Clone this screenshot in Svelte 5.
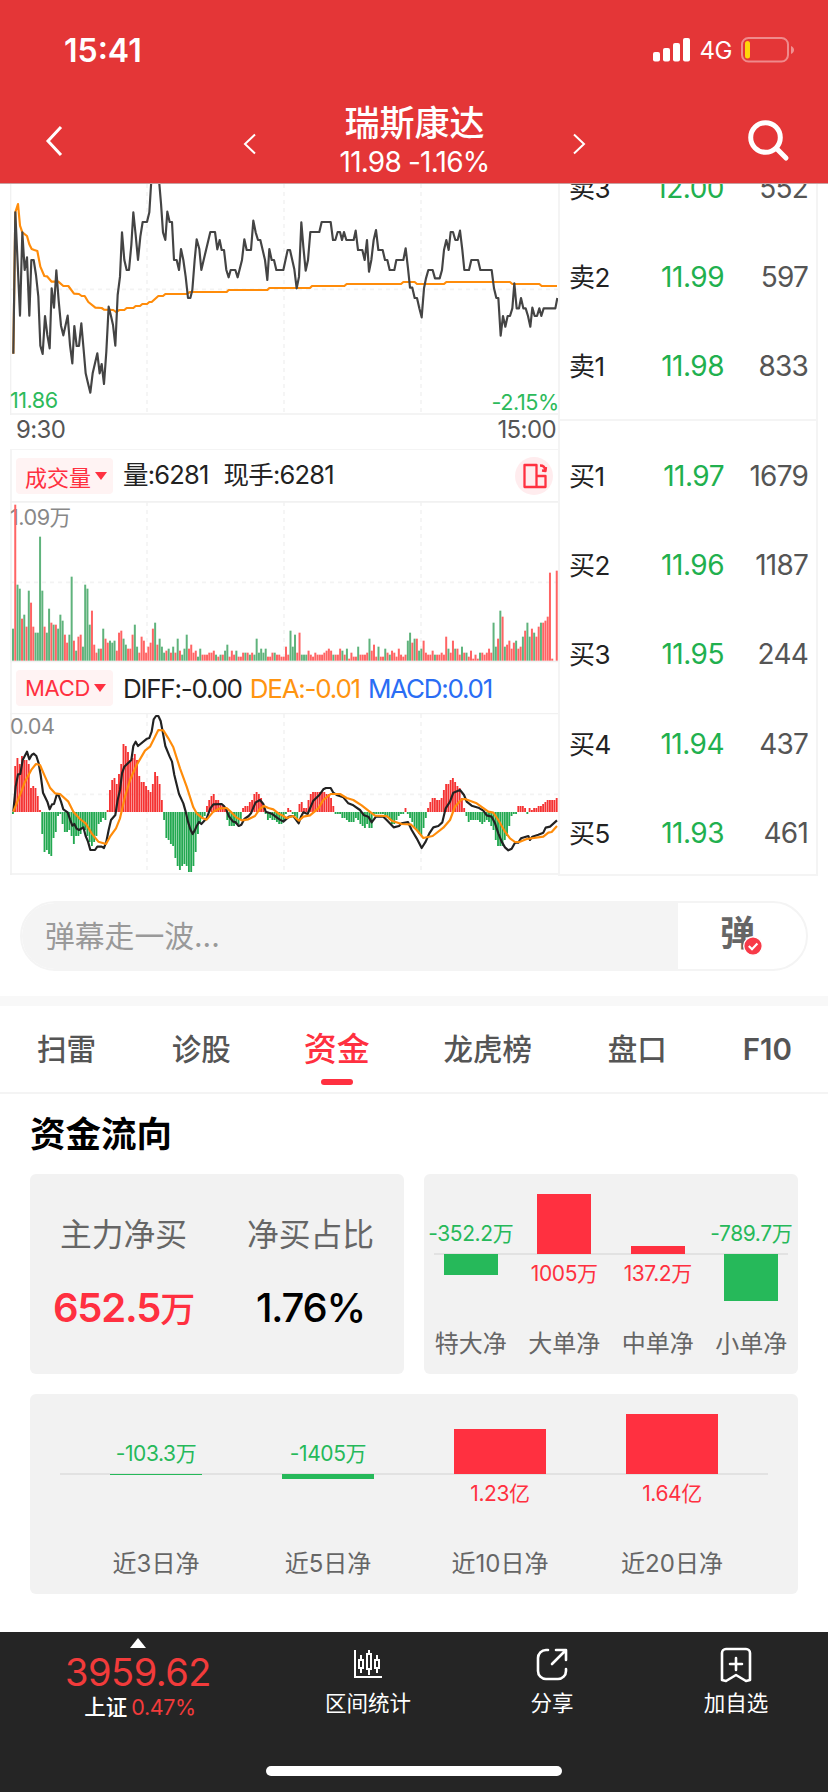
<script lang="ts">
  /** Intraday stock detail page: minute charts, order book, fund flow cards. */

  type Level = { label: string; price: string; volume: string };
  type Flow = { name: string; value: string; height: number };

  // Chart coordinates are in device pixels (3 per CSS px). Every session is
  // recorded from its own origin, the afternoon one starts at PM_OFFSET.
  const PM_OFFSET = 840;
  const LEFT = 36;
  const RIGHT = 1674;

  function line(am: string, pm: string) {
    const parse = (s: string, dx: number) =>
      s.split(" ").map((p) => {
        const [x, y] = p.split(",").map(Number);
        return `${x + dx},${y}`;
      });
    return [...parse(am, 0), ...parse(pm, PM_OFFSET)].join(" ");
  }

  const price = line(
    "40,521 46,97 53,250 60,407 67,157 74,270 81,232 88,407 94,240 101,240 108,285 115,350 121,497 128,522 135,408 142,465 149,505 155,325 162,383 169,271 176,362 183,437 190,466 203,407 210,495 217,550 223,438 230,498 237,498 244,430 251,510 257,580 264,610 271,638 278,580 292,520 299,580 305,552 312,612 319,515 326,380 333,408 339,435 346,497 353,345 360,290 366,157 373,240 380,270 387,270 394,195 400,97 407,165 414,240 421,170 428,126 441,126 448,97 454,0 477,0 483,70 489,157 496,180 502,95 509,126 516,126 522,240 530,240 537,270 543,207 550,240 557,290 564,354 571,354 577,330 584,240 590,178 598,207 604,270 611,240 631,156 645,156 652,208 659,180 665,210 672,210 679,270 686,292 692,270 706,270 713,292 726,240 733,178 740,210 753,210 760,122 767,157 774,180 781,180 788,210 795,240 802,300 808,207 815,240 822,240 829,270 850,270",
    "23,210 30,210 43,268 50,325 57,290 64,127 70,200 77,272 84,240 91,156 118,156 125,126 152,126 159,180 166,180 173,156 180,156 186,180 192,156 199,180 221,180 227,152 234,210 247,210 254,240 261,180 267,275 274,240 281,180 288,150 295,210 308,210 315,240 322,240 329,270 343,270 349,240 370,240 377,205 384,265 390,323 397,323 404,354 411,354 418,385 425,412 432,325 438,295 445,270 458,270 465,295 479,295 486,270 492,210 499,180 506,210 512,156 519,156 526,180 533,180 540,152 547,210 553,270 567,270 574,240 594,240 601,270 635,270 642,325 649,354 655,354 662,467 669,408 676,440 683,408 690,408 697,385 703,310 710,385 717,385 723,354 730,385 737,385 744,408 751,440 757,383 764,408 771,408 778,385 784,408 791,385 826,385 832,354"
  );
  const average = line(
    "40,521 46,97 54,72 60,137 67,157 81,168 88,193 95,207 103,210 112,213 121,260 133,288 141,289 155,305 175,305 190,318 205,318 222,341 237,342 245,348 254,348 265,366 286,383 305,384 312,389 340,390 348,396 358,390 373,390 380,384 400,384 407,378 420,378 427,372 441,372 448,366 455,366 475,348 489,348 496,342 560,342 570,336 680,336 686,330 802,330 808,324",
    "50,324 90,324 96,318 193,318 200,312 363,312 370,306 404,306 411,312 492,312 499,306 690,306 697,312 778,312 785,318 831,318"
  );
  const diff = line(
    "40,455 47,380 54,343 61,342 68,300 81,275 88,298 95,285 101,281 109,288 116,310 122,345 129,398 142,425 149,448 156,433 162,432 170,405 176,406 183,425 190,448 203,457 210,478 217,497 223,492 230,506 237,510 250,502 257,528 264,545 271,570 285,570 292,560 305,560 312,564 319,545 326,510 333,480 346,465 353,420 360,390 366,340 373,320 394,300 400,258 407,245 414,258 441,236 448,234 455,215 461,178 468,168 475,168 482,183 489,220 496,258 509,290 516,305 523,345 537,402 550,430 557,455 564,485 571,508 578,522 584,512 590,498 597,486 604,492 620,475 631,445 640,433 665,432 672,438 679,448 686,468 699,485 706,486 716,498 724,494 733,477 746,468 753,460 760,443 767,427 780,420 790,432 797,455 815,461 835,476",
    "10,485 27,470 40,468 56,490 63,470 70,457 83,462 90,445 100,422 118,405 130,388 138,384 152,384 160,398 172,406 190,412 205,430 220,436 240,450 252,466 265,470 275,487 288,470 310,470 320,480 341,502 357,498 365,490 384,486 395,510 410,535 425,564 437,545 448,520 460,502 475,498 487,487 497,445 510,425 520,398 540,390 552,405 560,425 575,437 595,443 610,452 620,466 635,470 645,490 655,520 665,545 675,562 685,571 695,566 705,548 715,548 723,535 745,528 750,540 757,530 775,524 790,518 797,503 810,500 831,481"
  );
  const dea = line(
    "40,455 60,405 75,365 95,328 108,312 120,315 135,350 150,383 165,400 180,402 205,425 220,455 240,477 257,490 275,520 295,545 318,552 330,530 348,505 360,475 375,410 390,360 410,315 435,272 450,260 475,210 490,211 505,235 520,262 540,325 560,380 580,442 590,460 605,473 620,479 640,455 660,445 680,444 695,458 710,473 725,481 745,478 765,468 780,446 792,438 805,444 820,448 835,460",
    "10,468 20,474 40,468 57,482 70,470 90,466 115,445 130,420 152,402 180,402 200,414 220,420 245,436 265,452 285,467 320,468 335,482 365,492 392,493 410,510 430,534 458,528 490,503 510,480 525,440 545,418 555,417 590,430 625,455 640,458 655,480 675,515 690,535 705,546 718,546 740,537 790,530 805,518 815,516 831,498"
  );

  // Volume per minute: u = price went up, d = price went down.
  const volumes =
    "d16 u78 d38 d36 u21 d23 u17 d35 u29 u17 d14 d14 d62 d35 u17 d14 d26 u19 d18 u18 d16 d23 d20 u13 u9 d13 d42 u10 d5 u12 u13 d7 d38 d36 d18 u25 u8 u4 d6 u6 d16 u11 u9 d10 d9 d10 u5 u14 u15 d11 d8 u6 u6 u13 d18 d7 u4 u12 u10 u4 u7 u9 u16 d19 u8 d11 d7 d4 u5 d6 u4 d7 u4 d11 u5 d3 d6 d13 u6 u8 u4 u5 d2 d6 u3 u3 u3 u4 u4 u5 d3 u2 d3 u3 d5 d8 u2 u5 u3 d5 u2 u2 u4 d4 u4 d3 u4 d3 d11 d4 d6 d4 d6 u2 u2 u4 d4 u3 u3 u2 u2 u7 u3 d15 d7 d13 u4 u14 d3 d3 d3 u5 u3 u2 u4 u3 u3 u3 u4 u5 u6 u5 d3 u3 u3 u6 d5 u3 d6 u1 u4 u2 u2 d7 u3 u3 u3 u4 d11 u5 u8 u2 d7 u2 u2 d6 u4 d3 u5 u4 u2 u6 u3 u2 u3 d10 d14 u9 d11 u11 d5 d6 u10 u4 u3 u3 u5 d3 u3 u3 u4 u3 u12 d6 u4 u10 d6 u6 u3 d7 u4 d4 u2 u5 u1 u3 u1 d4 u4 u3 u4 u6 u4 d19 d7 u11 d25 u22 d7 u8 u10 u6 u9 d10 u6 u7 d12 u15 d19 d12 u16 d14 u12 u17 d19 u19 u20 u22 u44 u1 u0 u45"
      .split(" ")
      .map((v) => ({ up: v[0] === "u", size: Number(v.slice(1)) * 6 }));

  const histogram =
    "-1 23 27 24 28 26 26 24 12 13 12 8 1 -11 -20 -19 -21 -22 -13 -10 -2 -1 -6 -10 -10 -9 -12 -16 -12 -12 -11 -8 -9 -12 -15 -17 -15 -12 -6 -5 -3 -4 1 11 16 17 14 19 24 34 33 30 26 27 29 26 18 15 15 13 11 10 14 20 18 14 6 -4 -13 -14 -16 -17 -23 -27 -29 -27 -26 -27 -30 -30 -27 -20 -11 -5 -3 -2 3 6 8 9 6 6 4 3 2 -4 -7 -7 -7 -6 -6 -4 2 3 3 5 6 9 10 9 7 4 -1 -4 -3 -4 -4 -5 -6 -6 -4 -1 2 1 -1 -2 -5 4 5 2 2 6 9 10 10 10 10 10 10 9 9 7 3 -1 -1 -1 -3 -3 -4 -5 -5 -5 -3 -4 -6 -7 -8 -6 -8 -8 -1 -1 -1 -1 -1 -2 -3 -4 -6 -6 -4 -2 -1 -1 2 -1 -3 -5 -8 -9 -11 -12 -8 -3 2 5 7 7 6 6 7 11 14 14 16 17 15 13 12 7 2 -2 -5 -4 -4 -4 -4 -5 -6 -5 -4 -5 -7 -9 -14 -17 -17 -17 -14 -12 -7 -2 -1 -1 3 3 3 2 -1 2 1 2 2 3 3 4 5 6 6 6 6 7"
      .split(" ")
      .map((v) => Number(v) * 6);

  const volumeStep = (RIGHT - LEFT) / volumes.length;
  const macdStep = (RIGHT - LEFT) / histogram.length;

  const asks: Level[] = [
    { label: "卖3", price: "12.00", volume: "552" },
    { label: "卖2", price: "11.99", volume: "597" },
    { label: "卖1", price: "11.98", volume: "833" },
  ];
  const bids: Level[] = [
    { label: "买1", price: "11.97", volume: "1679" },
    { label: "买2", price: "11.96", volume: "1187" },
    { label: "买3", price: "11.95", volume: "244" },
    { label: "买4", price: "11.94", volume: "437" },
    { label: "买5", price: "11.93", volume: "461" },
  ];

  const tabs = ["扫雷", "诊股", "资金", "龙虎榜", "盘口", "F10"];
  const activeTab = "资金";

  const orderFlows: Flow[] = [
    { name: "特大净", value: "-352.2万", height: -21 },
    { name: "大单净", value: "1005万", height: 60 },
    { name: "中单净", value: "137.2万", height: 8 },
    { name: "小单净", value: "-789.7万", height: -47 },
  ];
  const dayFlows: Flow[] = [
    { name: "近3日净", value: "-103.3万", height: -0.5 },
    { name: "近5日净", value: "-1405万", height: -5 },
    { name: "近10日净", value: "1.23亿", height: 45 },
    { name: "近20日净", value: "1.64亿", height: 60 },
  ];
</script>

{#snippet grid(top: number, bottom: number, middle: number)}
  <g class="grid">
    {#each [441, 852, 1263] as x}
      <line x1={x} x2={x} y1={top} y2={bottom} />
    {/each}
    <line x1="30" x2={RIGHT} y1={middle} y2={middle} />
  </g>
{/snippet}

{#snippet bookRow(level: Level)}
  <div class="level">
    <span class="level__label">{level.label}</span>
    <span class="level__price">{level.price}</span>
    <span class="level__volume">{level.volume}</span>
  </div>
{/snippet}

{#snippet flowChart(flows: Flow[])}
  <div class="flow__cols">
    {#each flows as flow (flow.name)}
      <div class="flow__col" class:flow__col--down={flow.height < 0}>
        <div class="flow__top">
          {#if flow.height < 0}
            <span class="flow__value">{flow.value}</span>
          {:else}
            <i style="height: {flow.height}px"></i>
          {/if}
        </div>
        <div class="flow__bottom">
          {#if flow.height < 0}
            <i style="height: {-flow.height}px"></i>
          {:else}
            <span class="flow__value">{flow.value}</span>
          {/if}
        </div>
        <span class="flow__name">{flow.name}</span>
      </div>
    {/each}
  </div>
{/snippet}

<div class="page">
  <header class="header">
    <div class="status">
      <span class="status__time">15:41</span>
      <div class="status__right">
        <svg width="38" height="24" viewBox="0 0 38 24" fill="#fff">
          <rect x="0" y="14" width="7" height="9.5" rx="2" />
          <rect x="10" y="10" width="7" height="13.5" rx="2" />
          <rect x="20" y="5" width="7" height="18.5" rx="2" />
          <rect x="30" y="0" width="7" height="23.5" rx="2" />
        </svg>
        <span class="status__net">4G</span>
        <svg width="54" height="26" viewBox="0 0 54 26">
          <rect x="1" y="1" width="46" height="23.5" rx="6.5" fill="none" stroke="#fff" stroke-opacity=".42" stroke-width="2" />
          <path d="M50 9c4 1.500 4 6.500 0 8z" fill="#fff" fill-opacity=".45" />
          <rect x="4" y="4" width="5" height="17.500" rx="2.500" fill="#ffd60a" />
        </svg>
      </div>
    </div>
    <div class="nav">
      <svg class="nav__back" width="18" height="32" viewBox="0 0 18 32"><path d="M16 2 3 16l13 14" /></svg>
      <svg class="nav__prev" width="14" height="22" viewBox="0 0 14 22"><path d="M12 1.500 2 11l10 9.500" /></svg>
      <div class="nav__title">
        <h1>瑞斯康达</h1>
        <p>11.98 -1.16%</p>
      </div>
      <svg class="nav__next" width="14" height="22" viewBox="0 0 14 22"><path d="m2 1.500 10 9.500L2 20.500" /></svg>
      <svg class="nav__search" width="42" height="42" viewBox="0 0 42 42">
        <circle cx="17.500" cy="17.500" r="14.800" />
        <path d="m28.500 28.500 9.500 9.500" />
      </svg>
    </div>
  </header>

  <section class="quote">
    <div class="charts">
      <svg width="550" height="232" viewBox="30 12 1650 696">
        {@render grid(12, 702, 328)}
        <path class="frame" d="M31.500 12v693M30 702h1644" />
        <polyline points={average} stroke="#ff8c0a" />
        <polyline points={price} stroke="#444" />
        <text x="30" y="685" class="down">11.86</text>
        <text x="1676" y="690" class="down" text-anchor="end">-2.15%</text>
      </svg>
      <div class="times"><span>9:30</span><span>15:00</span></div>

      <div class="tool">
        <button class="tag">成交量<i></i></button>
        <span class="tool__text tool__text--vol">量:6281</span>
        <span class="tool__text tool__text--vol">现手:6281</span>
        <svg class="tool__switch" width="38" height="38" viewBox="0 0 38 38">
          <circle cx="19" cy="19" r="19" fill="#ffecee" />
          <path d="M9.500 8h12v22h-12zM21.500 19h9v11h-9M25 8.500c3 0 5 1.500 5 4.500m-3 .5 3.500.5.5-4" fill="none" stroke="#ff3040" stroke-width="2.300" stroke-linejoin="round" />
        </svg>
      </div>
      <svg width="550" height="162" viewBox="30 183 1650 486">
        {@render grid(186, 662, 427)}
        <path class="frame" d="M33 183v486M30 185.500h1644M30 664h1644" />
        <text x="30" y="255" class="muted">1.09万</text>
        {#each volumes as bar, i}
          <rect x={LEFT + i * volumeStep} y={662 - bar.size} width={volumeStep - 0.8} height={bar.size} fill={bar.up ? "#ff6464" : "#5fb37c"} />
        {/each}
      </svg>

      <div class="tool tool--macd">
        <button class="tag">MACD<i></i></button>
        <span class="tool__text">DIFF:-0.00</span>
        <span class="tool__text tool__text--dea">DEA:-0.01</span>
        <span class="tool__text tool__text--macd">MACD:0.01</span>
      </div>
      <svg width="550" height="163" viewBox="30 159 1650 489">
        {@render grid(162, 642, 403)}
        <path class="frame" d="M33 159v486M30 160.500h1644M30 642h1644" />
        <text x="30" y="221" class="muted">0.04</text>
        {#each histogram as value, i}
          <rect x={LEFT + i * macdStep} y={value > 0 ? 456 - value : 456} width={macdStep - 1.2} height={Math.abs(value)} fill={value > 0 ? "#f53232" : "#22a850"} />
        {/each}
        <polyline points={diff} stroke="#222" />
        <polyline points={dea} stroke="#ff8c0a" />
      </svg>
    </div>

    <div class="book">
      <div class="book__side book__side--asks">
        {#each asks as level (level.label)}{@render bookRow(level)}{/each}
      </div>
      <div class="book__side">
        {#each bids as level (level.label)}{@render bookRow(level)}{/each}
      </div>
    </div>
  </section>

  <div class="comment">
    <span class="comment__input">弹幕走一波...</span>
    <span class="comment__toggle">
      弹
      <svg width="20" height="20" viewBox="0 0 20 20">
        <circle cx="10" cy="10" r="9.300" fill="#f83a48" stroke="#fff" stroke-width="1.400" />
        <path d="m5.800 10 3.200 3.200 5.400-5.700" fill="none" stroke="#fff" stroke-width="2.200" />
      </svg>
    </span>
  </div>

  <nav class="tabs">
    {#each tabs as tab (tab)}
      <span class="tab" class:tab--active={tab === activeTab}>{tab}</span>
    {/each}
  </nav>

  <main class="funds">
    <h2>资金流向</h2>
    <div class="funds__row">
      <div class="card summary">
        <div class="summary__item">
          <span class="summary__name">主力净买</span>
          <strong class="summary__value summary__value--up">652.5<b>万</b></strong>
        </div>
        <div class="summary__item">
          <span class="summary__name">净买占比</span>
          <strong class="summary__value">1.76%</strong>
        </div>
      </div>
      <div class="card flow">{@render flowChart(orderFlows)}</div>
    </div>
    <div class="card flow flow--wide">{@render flowChart(dayFlows)}</div>
  </main>

  <footer class="bottom">
    <div class="bottom__index">
      <i class="bottom__caret"></i>
      <span class="bottom__points">3959.62</span>
      <span class="bottom__name">上证<em>0.47%</em></span>
    </div>
    <div class="bottom__item">
      <svg width="36" height="36" viewBox="0 0 36 36" fill="none" stroke="#fff" stroke-width="2">
        <path d="M5 3v27h27" />
        <path d="M11 8v5m0 8v5M19 3v4m0 16v5M27 8v5m0 8v5" />
        <path d="M9 13h4v8H9zM17 7h4v15h-4zM25 13h4v8h-4z" />
      </svg>
      <span>区间统计</span>
    </div>
    <div class="bottom__item">
      <svg width="36" height="36" viewBox="0 0 36 36" fill="none" stroke="#fff" stroke-width="2.600" stroke-linecap="round" stroke-linejoin="round">
        <path d="M14 3h-2a8 8 0 0 0-8 8v13a8 8 0 0 0 8 8h12a8 8 0 0 0 8-8v-2M22 3h10v10M31 4 18 17" />
      </svg>
      <span>分享</span>
    </div>
    <div class="bottom__item">
      <svg width="36" height="36" viewBox="0 0 36 36" fill="none" stroke="#fff" stroke-width="2.600" stroke-linecap="round" stroke-linejoin="round">
        <path d="M8 2h20a4 4 0 0 1 4 4v27l-4 1-10-6-10 6-4-1V6a4 4 0 0 1 4-4zM18 11v12M12 17h12" />
      </svg>
      <span>加自选</span>
    </div>
    <i class="bottom__home"></i>
  </footer>
</div>

<style>
  :global(body) {
    margin: 0;
    background: #fff;
  }
  .page {
    --up: #ff3040;
    --down: #26b95a;
    --line: #f4f4f4;
    display: flex;
    flex-direction: column;
    width: 828px;
    height: 1792px;
    overflow: hidden;
    color: #222;
    font-family: Inter, "Noto Sans CJK SC", sans-serif;
  }
  .page * {
    box-sizing: border-box;
  }
  svg {
    display: block;
    flex: none;
  }

  .header {
    flex: none;
    height: 184px;
    color: #fff;
    background: #e43637;
    border-bottom: 1px solid #c9a0a0;
  }
  .status {
    display: flex;
    justify-content: space-between;
    height: 100px;
    padding: 0 33px 0 64px;
    align-items: center;
  }
  .status__time {
    font-size: 32px;
    font-weight: 600;
  }
  .status__right {
    display: flex;
    align-items: center;
    gap: 9px;
  }
  .status__net {
    font-size: 24px;
    letter-spacing: -0.5px;
  }
  .nav {
    display: flex;
    align-items: center;
    height: 82px;
    padding: 0 38px 0 45px;
    fill: none;
    stroke: #fff;
    stroke-width: 3;
  }
  .nav__prev,
  .nav__next {
    margin-top: 6px;
    stroke-width: 2;
  }
  .nav__prev {
    margin-left: 180px;
  }
  .nav__title {
    flex: 1;
    text-align: center;
    stroke: none;
    fill: #fff;
  }
  .nav__search {
    margin-left: 162px;
    stroke-width: 5;
    stroke-linecap: round;
  }
  h1 {
    margin: 0;
    font-size: 35px;
    font-weight: 500;
    line-height: 43px;
  }
  .nav__title p {
    margin: 0;
    font-size: 28px;
    line-height: 35px;
    letter-spacing: -0.8px;
  }

  .quote {
    display: flex;
    flex: none;
    height: 692px;
    padding-left: 10px;
  }
  .charts {
    width: 548px;
  }
  .charts polyline {
    fill: none;
    stroke-width: 6.500;
    stroke-linejoin: round;
  }
  .charts text {
    font-size: 65px;
    letter-spacing: -1.5px;
  }
  .down {
    fill: #2dba5b;
  }
  .muted {
    fill: #888;
  }
  .frame {
    fill: none;
    stroke: #f1f1f1;
    stroke-width: 5;
  }
  .grid line {
    stroke: #f3f3f3;
    stroke-width: 5;
    stroke-dasharray: 12 12;
  }
  .times {
    display: flex;
    justify-content: space-between;
    height: 33px;
    padding: 0 2px 0 6px;
    color: #555;
    font-size: 24px;
    line-height: 28px;
    letter-spacing: -0.6px;
  }
  .tool {
    display: flex;
    align-items: center;
    height: 52px;
    padding-left: 4px;
    border-top: 1px solid var(--line);
    border-left: 2px solid var(--line);
    white-space: nowrap;
  }
  .tool--macd {
    height: 50px;
    border-top: 0;
  }
  .tag {
    display: flex;
    align-items: center;
    width: 97px;
    height: 36px;
    margin-right: 10px;
    padding: 0 0 0 9px;
    border: 0;
    border-radius: 4px;
    color: var(--up);
    background: #fff3f3;
    font: inherit;
    font-size: 22px;
  }
  .tool--macd .tag {
    letter-spacing: -0.3px;
  }
  .tag i {
    margin-left: 4px;
    border: 6px solid transparent;
    border-top: 8px solid var(--up);
    border-bottom: 0;
  }
  .tool__text {
    margin-right: 8px;
    font-size: 26px;
    letter-spacing: -1.250px;
  }
  .tool__text--vol {
    margin-right: 15px;
    font-size: 25.500px;
    letter-spacing: -0.800px;
    line-height: 34px;
    padding-bottom: 2px;
  }
  .tool__text--dea {
    color: #ff9410;
  }
  .tool__text--macd {
    color: #2a6df4;
  }
  .tool__switch {
    margin: 0 5px 0 auto;
  }

  .book {
    width: 260px;
    border: solid var(--line);
    border-width: 0 2px 2px;
    overflow: hidden;
  }
  .book__side {
    height: 454px;
    padding-top: 10px;
  }
  .book__side--asks {
    display: flex;
    flex-direction: column;
    justify-content: flex-end;
    height: 237px;
    padding: 0 0 8px;
    border-bottom: 2px solid var(--line);
  }
  .level {
    display: flex;
    flex: none;
    align-items: center;
    height: 89.300px;
    padding: 0 8px 0 9px;
    font-size: 28px;
    letter-spacing: -0.5px;
  }
  .level__label {
    width: 80px;
    padding-bottom: 3px;
    font-size: 26px;
  }
  .level__price {
    width: 75px;
    color: #21b04e;
    text-align: right;
  }
  .level__volume {
    flex: 1;
    color: #555;
    text-align: right;
    letter-spacing: -0.8px;
  }

  .comment {
    display: flex;
    flex: none;
    height: 70px;
    margin: 25px 20px;
    border: 2px solid #f4f4f4;
    border-radius: 35px;
    overflow: hidden;
  }
  .comment__input {
    flex: 1;
    padding-left: 23px;
    color: #999;
    background: #f4f4f4;
    font-size: 29.800px;
    line-height: 66px;
  }
  .comment__toggle {
    position: relative;
    width: 128px;
    padding-left: 42px;
    color: #666;
    font-size: 35px;
    font-weight: 700;
    line-height: 60px;
  }
  .comment__toggle svg {
    position: absolute;
    top: 33px;
    left: 65px;
  }

  .tabs {
    display: flex;
    flex: none;
    justify-content: space-between;
    height: 98px;
    padding: 0 36px 0 37px;
    border-top: 10px solid #f8f8f8;
    border-bottom: 2px solid #f4f4f4;
    color: #555;
    font-size: 29.500px;
    font-weight: 500;
    line-height: 86px;
  }
  .tab:last-child {
    font-weight: 600;
  }
  .tab--active {
    position: relative;
    margin: 0 -2px 0 -3px;
    color: var(--up);
    font-size: 33px;
  }
  .tab--active::after {
    content: "";
    position: absolute;
    bottom: 7px;
    left: 50%;
    width: 32px;
    height: 6px;
    margin-left: -16px;
    border-radius: 3px;
    background: var(--up);
  }

  .funds {
    flex: 1;
    padding: 0 30px;
  }
  h2 {
    height: 80px;
    margin: 0;
    color: #000;
    font-size: 35.500px;
    font-weight: 700;
    line-height: 81px;
  }
  .funds__row {
    display: flex;
    gap: 20px;
    margin-bottom: 20px;
  }
  .card {
    flex: 1;
    height: 200px;
    border-radius: 6px;
    background: #f2f2f2;
  }
  .summary {
    display: flex;
    padding-top: 37px;
  }
  .summary__item {
    display: flex;
    flex: 1;
    flex-direction: column;
    align-items: center;
  }
  .summary__name {
    color: #666;
    font-size: 31.800px;
    line-height: 48px;
  }
  .summary__value {
    color: #000;
    font-size: 40px;
    font-weight: 500;
    line-height: 98px;
    letter-spacing: -1.200px;
  }
  .summary__value--up {
    color: var(--up);
    font-weight: 600;
  }
  .summary__value b {
    font-size: 35px;
    font-weight: 500;
  }
  .flow__cols {
    display: flex;
    /* zero axis, inset from the card edges */
    background: linear-gradient(#e2e2e2, #e2e2e2) center 79px / calc(100% - 20px) 2px no-repeat;
  }
  .flow--wide .flow__cols {
    padding: 0 40px;
    background-size: calc(100% - 60px) 2px;
  }
  .flow__col {
    display: flex;
    flex: 1;
    flex-direction: column;
    align-items: center;
    color: var(--up);
    white-space: nowrap;
  }
  .flow__col--down {
    color: var(--down);
  }
  .flow__col i {
    width: 54px;
    background: currentColor;
  }
  .flow--wide .flow__col i {
    width: 92px;
  }
  .flow__top,
  .flow__bottom {
    display: flex;
    flex-direction: column;
    align-items: center;
    height: 80px;
  }
  .flow__top {
    justify-content: flex-end;
  }
  .flow__bottom {
    height: 70px;
  }
  .flow__value {
    font-size: 21px;
    line-height: 40px;
    letter-spacing: -0.4px;
  }
  .flow__name {
    color: #666;
    font-size: 24px;
    line-height: 40px;
  }

  .bottom {
    display: flex;
    flex: none;
    flex-wrap: wrap;
    justify-content: center;
    align-content: flex-start;
    height: 160px;
    color: #fff;
    background: #252525;
  }
  .bottom__index {
    display: flex;
    flex-direction: column;
    align-items: center;
    width: 276px;
    height: 134px;
    padding-top: 6px;
  }
  .bottom__caret {
    border: 8px solid transparent;
    border-top: 0;
    border-bottom: 10px solid #fff;
  }
  .bottom__points {
    color: #f23b3b;
    font-size: 38px;
    line-height: 49px;
    letter-spacing: -0.5px;
  }
  .bottom__name {
    padding-left: 4px;
    font-size: 21.500px;
    font-weight: 500;
    line-height: 20px;
  }
  .bottom__name em {
    margin-left: 4px;
    color: #f23b3b;
    font-style: normal;
    font-weight: 400;
    letter-spacing: -0.4px;
  }
  .bottom__item {
    display: flex;
    flex-direction: column;
    align-items: center;
    width: 184px;
    padding-top: 15px;
    font-size: 21.500px;
    line-height: 40px;
  }
  .bottom__home {
    width: 296px;
    height: 10px;
    border-radius: 5px;
    background: #fff;
  }
</style>
